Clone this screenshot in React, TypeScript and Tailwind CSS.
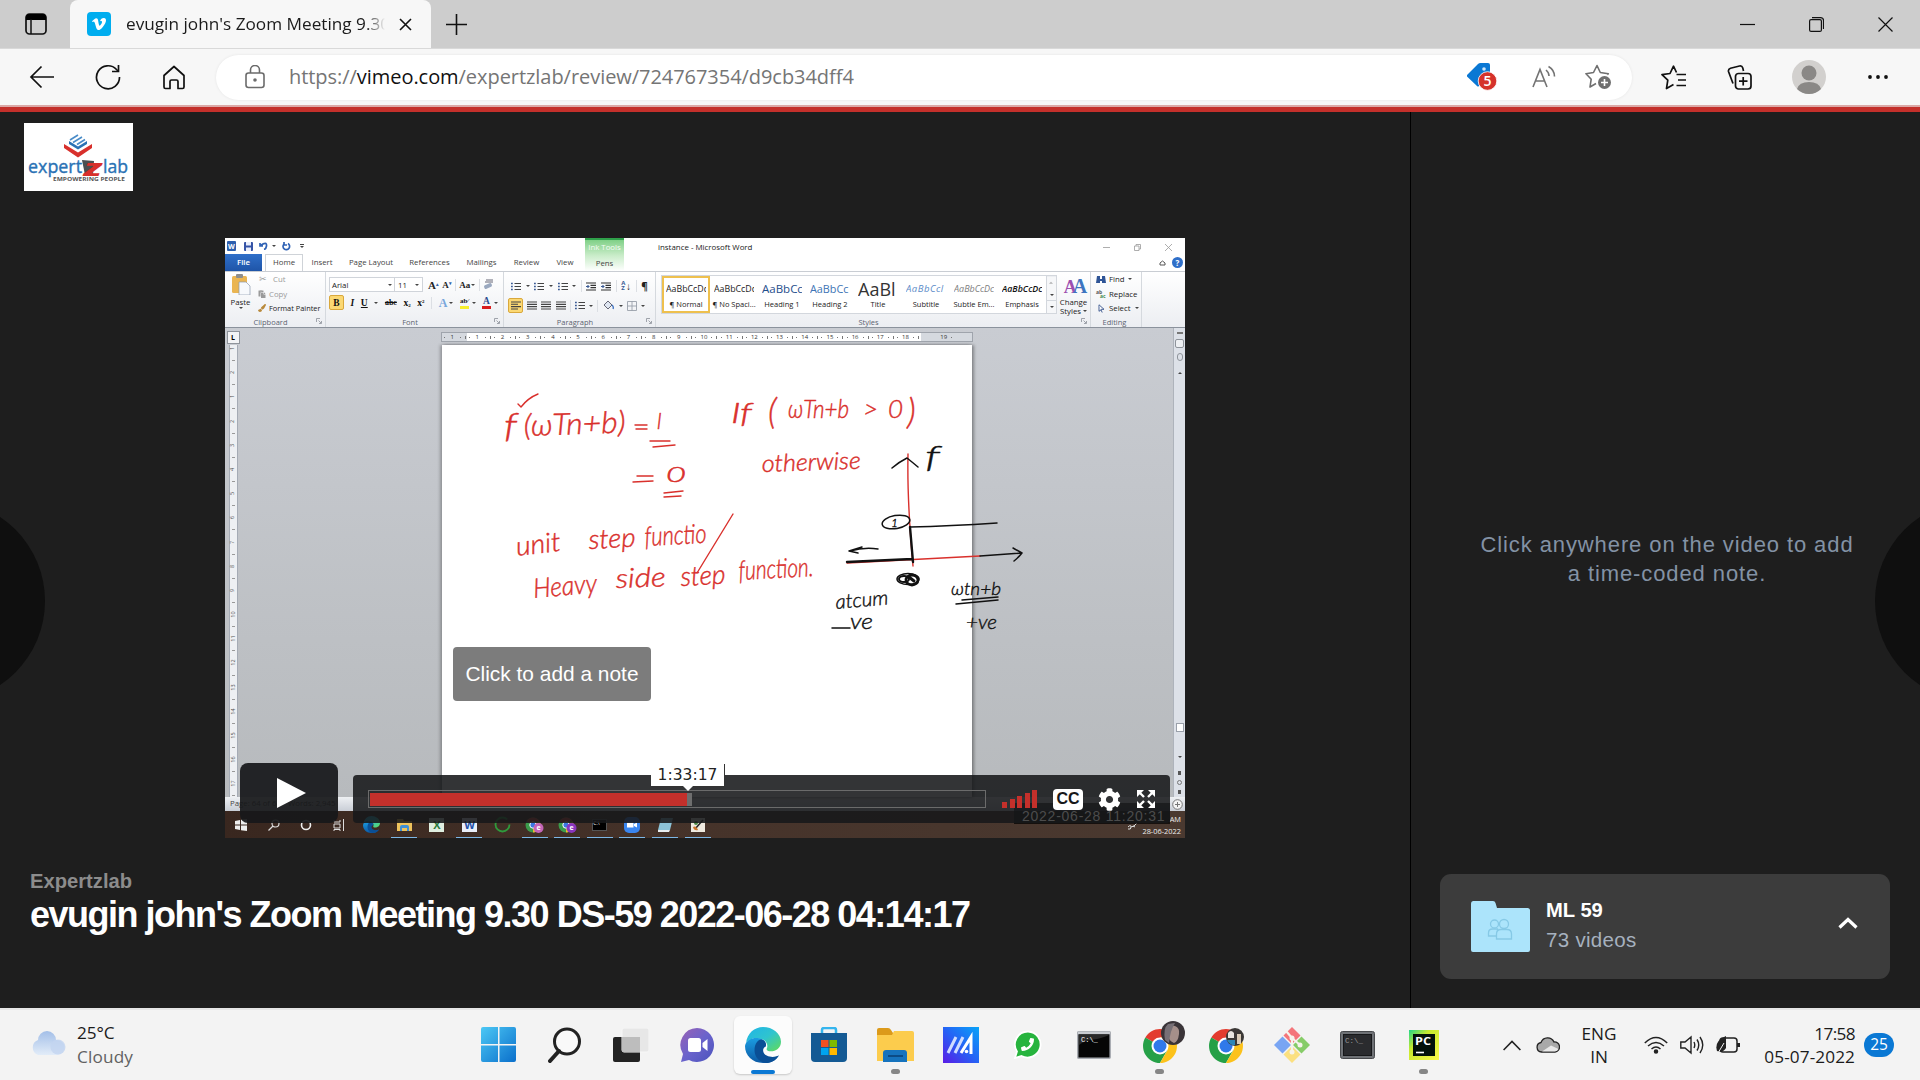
import React from "react";
import { FaVimeoV, FaPaste, FaPaintBrush, FaCog, FaPhoneAlt } from "react-icons/fa";

const UI = "font-['Open_Sans',sans-serif]";

/* ---------- browser chrome ---------- */

function TabStrip() {
  return (
    <div className="flex h-12 items-center bg-[#cdcdcd]">
      <div className="flex h-12 w-[70px] shrink-0 items-center pl-[25px]">
        <svg width="22" height="22" viewBox="0 0 22 22" fill="none">
          <rect x="1" y="1" width="20" height="20" rx="3.500" stroke="#111" strokeWidth="1.700" />
          <path d="M1 7V4.500A3.500 3.500 0 0 1 4.500 1h13A3.500 3.500 0 0 1 21 4.500V7z" fill="#000" />
          <path d="M6 6v15" stroke="#111" strokeWidth="1.500" />
        </svg>
      </div>
      <div className="relative flex h-12 w-[361px] shrink-0 items-center rounded-t-[8px] bg-[#f7f7f7] pl-[17px]">
        <div className="grid h-6 w-6 place-items-center rounded-[4px] bg-[#00adef] text-white">
          <FaVimeoV size={16} />
        </div>
        <div className="ml-[15px] w-[259px] overflow-hidden whitespace-nowrap text-[17.200px] text-[#1b1b1b] [mask-image:linear-gradient(to_right,black_93%,transparent)]">
          evugin john's Zoom Meeting 9.30
        </div>
        <svg className="ml-[14px]" width="13" height="13" viewBox="0 0 13 13" stroke="#111" strokeWidth="1.600">
          <path d="M1 1l11 11M12 1L1 12" />
        </svg>
      </div>
      <svg className="ml-[15px]" width="21" height="21" viewBox="0 0 21 21" stroke="#111" strokeWidth="1.600">
        <path d="M10.500 0v21M0 10.500h21" />
      </svg>
      <div className="ml-auto mr-[27px] flex items-center gap-[54px]">
        <svg width="15" height="15" stroke="#111" strokeWidth="1.200"><path d="M0 7.500h15" /></svg>
        <svg width="15" height="15" viewBox="0 0 15 15" fill="none" stroke="#111" strokeWidth="1.200">
          <rect x=".6" y="2.600" width="11.800" height="11.800" rx="1.500" />
          <path d="M3 .6h8.500a3 3 0 0 1 3 3V12" />
        </svg>
        <svg width="15" height="15" viewBox="0 0 15 15" stroke="#111" strokeWidth="1.200"><path d="M.5.5l14 14M14.500.5l-14 14" /></svg>
      </div>
    </div>
  );
}

function Toolbar() {
  return (
    <div className="flex h-[57px] items-center border-t border-[#d9d9d9] bg-[#f7f7f7]">
      <svg className="ml-[29px]" width="26" height="24" viewBox="0 0 26 24" fill="none" stroke="#111" strokeWidth="1.700">
        <path d="M25 12H2M12.500 1.500L2 12l10.500 10.500" />
      </svg>
      <svg className="ml-[40px]" width="26" height="26" viewBox="0 0 26 26" fill="none" stroke="#111" strokeWidth="1.700">
        <path d="M24.500 13A11.500 11.500 0 1 1 21.500 5.500L23 7" />
        <path d="M23.500 1v6.500H17" />
      </svg>
      <svg className="ml-[41px]" width="24" height="25" viewBox="0 0 24 25" fill="none" stroke="#111" strokeWidth="1.700" strokeLinejoin="round">
        <path d="M2 10.500L12 1.500l10 9v11.500a1.500 1.500 0 0 1-1.500 1.500H16v-7a1.500 1.500 0 0 0-1.500-1.500h-5A1.500 1.500 0 0 0 8 16.500v7H3.500A1.500 1.500 0 0 1 2 22z" />
      </svg>
      <div className="ml-[30px] flex h-[45px] w-[1416px] items-center rounded-full bg-white pl-[29px] shadow-[0_0_3px_rgba(0,0,0,0.08)]">
        <svg width="20" height="24" viewBox="0 0 20 24" fill="none" stroke="#6b6b6b" strokeWidth="1.600">
          <rect x="1" y="8" width="18" height="14.500" rx="2.500" />
          <path d="M5.500 8V5a4.500 4.500 0 0 1 9 0v3" />
          <circle cx="10" cy="15" r="1" fill="#6b6b6b" />
        </svg>
        <div className="-mt-px ml-6 whitespace-nowrap text-[20px] tracking-[-0.05px] text-[#757575]">
          https://<span className="text-[#111]">vimeo.com</span>/expertzlab/review/724767354/d9cb34dff4
        </div>
        <svg className="ml-auto" width="31" height="30" viewBox="0 0 31 30">
          <path d="M1 13L12 2q1-1 2.500-1H22q2 0 2 2v9L13 24q-1 1-2 0L1 14.500z" fill="#0a78d4" />
          <circle cx="18" cy="7" r="1.800" fill="#cfe6f8" />
          <circle cx="21.500" cy="19" r="9.300" fill="#d5322b" stroke="#fff" strokeWidth=".8" />
          <text x="21.500" y="24.200" textAnchor="middle" fontSize="14" fontWeight="600" fill="#fff" fontFamily="Open Sans">5</text>
        </svg>
        <svg className="ml-[35px]" width="24" height="24" viewBox="0 0 24 24" fill="none" stroke="#737373" strokeWidth="1.600">
          <path d="M1 22L8 4.500 15 22M3.500 16h9M14 5q3 2.500 3 6M16.500 1.500q6 3.500 6 10" />
        </svg>
        <svg className="ml-[29px] mr-[20px]" width="27" height="26" viewBox="0 0 27 26" fill="none" stroke="#6f6f6f" strokeWidth="1.600" strokeLinejoin="round">
          <path d="M11 19.500L5 23l1.200-7.800L1 9.700l7.500-1.200L12 1.500l3.300 7 8 1.200-1 1" />
          <circle cx="19.500" cy="18.500" r="6.500" fill="#6f6f6f" stroke="none" />
          <path d="M19.500 15v7M16 18.500h7" stroke="#fff" />
        </svg>
      </div>
      <svg className="ml-[29px]" width="25" height="25" viewBox="0 0 25 25" fill="none" stroke="#111" strokeWidth="1.700" strokeLinejoin="round">
        <path d="M12.500 19.500L5.500 23.500l1.300-8.300L1 9.700l8-1.200 3.500-7.300 3 6.300M15.500 9.500H25M17 15h8M15.500 20.500H25" />
      </svg>
      <svg className="ml-[41px]" width="25" height="25" viewBox="0 0 25 25" fill="none" stroke="#111" strokeWidth="1.700">
        <rect x="8.500" y="8.500" width="15.500" height="15.500" rx="3" />
        <path d="M16.200 12v8.500M12 16.200h8.500M6 18.500L1.500 6.500Q1 4 3.500 3.200L12.500 1Q15 .5 15.800 3L16.500 6" />
      </svg>
      <svg className="ml-[40px]" width="34" height="34" viewBox="0 0 34 34">
        <circle cx="17" cy="17" r="17" fill="#d2d0ce" />
        <circle cx="17" cy="13" r="7.500" fill="#8a8886" />
        <path d="M5 29q2-7 12-7t12 7q-5 5-12 5t-12-5z" fill="#8a8886" />
      </svg>
      <svg className="ml-[42px]" width="20" height="6" fill="#111">
        <circle cx="2" cy="3" r="1.900" /><circle cx="10" cy="3" r="1.900" /><circle cx="18" cy="3" r="1.900" />
      </svg>
    </div>
  );
}

/* ---------- recorded Word window ---------- */

const Caret = () => <span className="inline-block h-0 w-0 border-x-[2px] border-t-[2.500px] border-x-transparent border-t-[#444]" />;
const Sep = () => <span className="h-3 w-px bg-[#dcdfe4]" />;

function Lines({ bullets = false, color = "#444" }: { bullets?: boolean; color?: string }) {
  return (
    <svg width="10" height="9" viewBox="0 0 10 9" stroke={color} strokeWidth="1.100">
      {bullets ? <path d="M3.500 1.500H10M3.500 4.500H10M3.500 7.500H10" /> : <path d="M0 1h10M0 3.300h7M0 5.600h10M0 8h7" />}
      {bullets && <path d="M0 1.500h1.800M0 4.500h1.800M0 7.500h1.800" stroke="#3a5a94" strokeWidth="1.700" />}
    </svg>
  );
}

function FullLines() {
  return (
    <svg width="10" height="9" viewBox="0 0 10 9" stroke="#444" strokeWidth="1.200">
      <path d="M0 1h10M0 3.300h10M0 5.600h10M0 8h10" />
    </svg>
  );
}

function Indent() {
  return (
    <svg width="10" height="9" viewBox="0 0 10 9" stroke="#333" strokeWidth="1.200">
      <path d="M0 1h10M4.500 3.300H10M4.500 5.600H10M0 8h10" />
      <path d="M0 4.500h3.500M2 3v3" stroke="#3a5a94" />
    </svg>
  );
}

function Launcher() {
  return (
    <svg width="6" height="6" viewBox="0 0 6 6" fill="none" stroke="#8a8f98" strokeWidth=".8">
      <path d="M.5 4V.5H4M2.500 2.500L5 5M5.500 3v2.500H3" />
    </svg>
  );
}

function Group({ label, w, launcher = true, children }: { label: string; w: string; launcher?: boolean; children: React.ReactNode }) {
  return (
    <div className={"flex h-full shrink-0 flex-col border-r border-[#d5d9de] " + w}>
      <div className="h-[43px]">{children}</div>
      <div className="flex h-3 items-center pr-[3px] text-[7.500px] text-[#5c6370]">
        <span className="flex-1 pt-px text-center leading-3">{label}</span>
        {launcher && <Launcher />}
      </div>
    </div>
  );
}

const STYLES = [
  { s: "AaBbCcDc", n: "¶ Normal", c: "text-[8.800px] text-[#222]" },
  { s: "AaBbCcDc", n: "¶ No Spaci...", c: "text-[8.800px] text-[#222]" },
  { s: "AaBbCc", n: "Heading 1", c: "text-[11.500px] text-[#1f4e8c]" },
  { s: "AaBbCc", n: "Heading 2", c: "text-[10.800px] text-[#3d74b5]" },
  { s: "AaBl", n: "Title", c: "text-[18px] text-[#333]" },
  { s: "AaBbCcl", n: "Subtitle", c: "text-[9.500px] italic tracking-[0.5px] text-[#5b8cc8]" },
  { s: "AaBbCcDc", n: "Subtle Em...", c: "text-[9px] italic text-[#808080]" },
  { s: "AaBbCcDc", n: "Emphasis", c: "text-[8.800px] italic font-semibold text-[#111]" },
];

function Ribbon() {
  return (
    <div className="flex h-[57px] border-b border-t border-b-[#8b929c] border-t-[#c9cdd3] bg-gradient-to-b from-white to-[#eceef2] text-[7.800px] leading-[10px] text-[#222]">
      <Group label="Clipboard" w="w-[101px]">
        <div className="flex pt-[2px]">
          <div className="flex w-[31px] flex-col items-center">
            <svg width="20" height="21" viewBox="0 0 20 21">
              <rect x="1" y="2" width="15" height="17" rx="1.500" fill="#eab552" />
              <rect x="5" y="0" width="7" height="4" rx="1" fill="#8d8d8d" />
              <path d="M8 8h7l4 4v9H8z" fill="#f7f9fc" stroke="#8b98ad" strokeWidth=".7" />
            </svg>
            <span className="mt-[2px]">Paste</span>
            <Caret />
          </div>
          <div className="flex flex-col gap-[4.500px]">
            <span className="flex items-center gap-[6px] pl-[3px] text-[#9a9a9a]"><span className="text-[9px]">✂</span>Cut</span>
            <span className="flex items-center gap-[3px] pl-[2px] text-[#9a9a9a]"><FaPaste size={8} />Copy</span>
            <span className="flex items-center gap-[3px] whitespace-nowrap pl-[2px] text-[7.400px]"><FaPaintBrush size={8} color="#b98a3c" />Format Painter</span>
          </div>
        </div>
      </Group>
      <Group label="Font" w="w-[178px]">
        <div className="flex items-center pl-[3px] pt-[5px]">
          <span className="flex h-[15px] w-[66px] items-center justify-between border border-[#d0d4da] bg-white px-[2px]">Arial<Caret /></span>
          <span className="flex h-[15px] w-[28px] items-center justify-between border border-l-0 border-[#d0d4da] bg-white px-[3px]">11<Caret /></span>
          <div className="flex flex-1 items-center justify-between pl-[5px] pr-[8px] font-['Liberation_Serif',serif] font-bold text-[#222]">
            <span className="text-[11px]">A<sup className="text-[5px] text-[#3463a8]">▴</sup></span>
            <span className="text-[9px]">A<sup className="text-[5px] text-[#3463a8]">▾</sup></span>
            <Sep />
            <span className="flex items-center gap-px text-[9px]">Aa<Caret /></span>
            <Sep />
            <svg width="12" height="11" viewBox="0 0 12 11"><rect x="1" y="5" width="8" height="4" rx="1.500" transform="rotate(-25 5 7)" fill="#9aa8bf" /><path d="M2 3h8M3 1h7" stroke="#556" strokeWidth=".9" /></svg>
          </div>
        </div>
        <div className="flex items-center justify-between pl-[3px] pr-[5px] pt-[3px] font-['Liberation_Serif',serif] text-[9.500px] font-bold text-[#111]">
          <span className="grid h-[15px] w-[15px] place-items-center rounded-[2px] border border-[#d9a83c] bg-[#fbd873]">B</span>
          <span className="italic">I</span>
          <span className="underline">U</span>
          <Caret />
          <span className="text-[8px] line-through">abc</span>
          <span>x<sub className="text-[5px]">2</sub></span>
          <span>x<sup className="text-[5px]">2</sup></span>
          <Sep />
          <span className="flex items-center gap-[2px] text-[12px] text-[#78a6dc]">A<Caret /></span>
          <span className="flex items-center gap-[3px]"><span className="border-b-[3px] border-[#f6ee2c] text-[7px] leading-[9px]">ab⁄</span><Caret /></span>
          <span className="flex items-center gap-[3px]"><span className="border-b-[3px] border-[#d81e1e] px-px leading-[9px] text-[#2a4b8d]">A</span><Caret /></span>
        </div>
      </Group>
      <Group label="Paragraph" w="w-[152px]">
        <div className="flex items-center justify-between pl-[7px] pr-[7px] pt-[8px]">
          <Lines bullets /><Caret /><Lines bullets /><Caret /><Lines bullets /><Caret /><Sep />
          <Indent /><Indent /><Sep />
          <span className="text-[6px] font-bold leading-[5px] text-[#3a5a94]">A<br />Z</span><span className="-ml-1 text-[10px]">↓</span><Sep />
          <span className="text-[10px] font-bold">¶</span>
        </div>
        <div className="flex items-center justify-between pl-[4px] pr-[10px] pt-[6px]">
          <span className="grid h-[15px] w-[15px] place-items-center rounded-[2px] border border-[#d9a83c] bg-[#fbd873]"><Lines /></span>
          <FullLines /><FullLines /><FullLines /><Sep />
          <Lines bullets /><Caret /><Sep />
          <svg width="12" height="11" viewBox="0 0 12 11"><path d="M2 5l4-4 4 4-4 4z" fill="#dfe6f1" stroke="#445" strokeWidth=".8" /><path d="M10 5q2 2 1 4" stroke="#3a6fc0" strokeWidth="1.300" fill="none" /></svg><Caret />
          <svg width="10" height="10" viewBox="0 0 10 10" fill="none" stroke="#9aa0aa" strokeWidth=".9"><path d="M.5.5h9v9h-9zM5 0v10M0 5h10" /></svg><Caret />
        </div>
      </Group>
      <Group label="Styles" w="w-[435px]">
        <div className="flex pl-[5px] pt-[3px]">
          <div className="flex h-[39px] border border-[#d3d7dd] bg-white">
            {STYLES.map((s, i) => (
              <div key={s.n} className={"flex h-[37px] w-12 flex-col items-center justify-between border-2 pb-[2px] pt-[2px] " + (i === 0 ? "border-[#eec04e]" : "border-transparent")}>
                <div className={"flex h-[18px] w-[40px] items-center overflow-hidden whitespace-nowrap " + s.c}>{s.s}</div>
                <span className="whitespace-nowrap text-[7.500px]">{s.n}</span>
              </div>
            ))}
          </div>
          <div className="flex h-[39px] w-[10px] flex-col divide-y divide-[#d3d7dd] border border-l-0 border-[#d3d7dd] bg-[#f6f7f9]">
            <span className="grid flex-1 rotate-180 place-items-center opacity-40"><Caret /></span>
            <span className="grid flex-1 place-items-center"><Caret /></span>
            <span className="grid flex-1 place-items-center"><Caret /></span>
          </div>
          <div className="flex flex-1 flex-col items-center text-center leading-[8.500px]">
            <span className="font-['Liberation_Serif',serif] text-[18px] font-bold leading-[22px] tracking-[-4px] text-[#9c4fb0]">A<span className="text-[20px] text-[#3d74c0]">A</span></span>
            <span>Change</span>
            <span className="flex items-center gap-[2px]">Styles <Caret /></span>
          </div>
        </div>
      </Group>
      <Group label="Editing" w="w-[51px]" launcher={false}>
        <div className="flex flex-col gap-[4.600px] pl-[5px] pt-[2px]">
          <span className="flex items-center gap-[3px]">
            <svg width="10" height="9" viewBox="0 0 10 9" fill="#2f5597"><path d="M1 1h3v3h2V1h3l1 7H6V6H4v2H0z" /></svg>Find <Caret />
          </span>
          <span className="flex items-center gap-[2px]"><span className="w-[11px] text-[5px] font-bold leading-[4px] text-[#555]">ab<br /><span className="pl-1 text-[#3c8a4e]">ac</span></span>Replace</span>
          <span className="flex items-center gap-[4px] pl-[2px]">
            <svg width="7" height="9" viewBox="0 0 7 9" fill="#fff" stroke="#34518a" strokeWidth=".9"><path d="M1 .8v6.500l2-1.500 1.200 2.700" /><path d="M1 .8l5 4.500H3" /></svg>Select <Caret />
          </span>
        </div>
      </Group>
    </div>
  );
}

const TABS = [
  { t: "Insert", w: "w-[38px]" },
  { t: "Page Layout", w: "w-[60px]" },
  { t: "References", w: "w-[57px]" },
  { t: "Mailings", w: "w-[47px]" },
  { t: "Review", w: "w-[43px]" },
  { t: "View", w: "w-[34px]" },
];

function WordHeader() {
  return (
    <div className="flex h-[33px] bg-white text-[7.800px] text-[#444]">
      <div className="flex w-[360px] flex-col">
        <div className="flex h-4 items-center pl-[2px]">
          <span className="grid h-[10px] w-[9px] place-items-center rounded-[1px] bg-[#2d5fae] text-[7px] font-bold leading-none text-white">W</span>
          <span className="ml-[3px]"><Sep /></span>
          <svg className="ml-[5px]" width="9" height="9" viewBox="0 0 9 9"><rect width="9" height="9" rx="1" fill="#3553a6" /><path d="M2 0h5v3.500H2zM2 5.500h5V9H2z" fill="#e9eefb" /></svg>
          <svg className="ml-[6px]" width="9" height="8" viewBox="0 0 9 8" fill="none" stroke="#2f62b5" strokeWidth="1.700"><path d="M1 1v3h3M1.500 3.500Q8-1 7.500 4q-.5 3-2.500 3.500" /></svg>
          <span className="ml-[4px] flex items-center"><Caret /></span>
          <svg className="ml-[6px]" width="9" height="9" viewBox="0 0 9 9" fill="none" stroke="#2f62b5" strokeWidth="1.700"><path d="M6 1.500A3.300 3.300 0 1 1 2 2M2 0v3h3" /></svg>
          <span className="ml-[8px]"><Sep /></span>
          <span className="ml-[1px] flex flex-col items-center gap-[1px]"><span className="h-px w-1 bg-[#444]" /><Caret /></span>
        </div>
        <div className="flex flex-1 items-center">
          <span className="grid h-full w-[37px] place-items-center bg-gradient-to-b from-[#2f6fc9] to-[#1f55a8] font-semibold text-white">File</span>
          <span className="ml-[3px] grid h-full w-[38px] place-items-center border-x border-t border-[#cfd3d8] bg-white">Home</span>
          {TABS.map((t) => (
            <span key={t.t} className={"whitespace-nowrap pt-px text-center " + t.w}>{t.t}</span>
          ))}
        </div>
      </div>
      <div className="flex w-[39px] flex-col items-center border-t-2 border-[#2fa04a] bg-gradient-to-b from-[#7fd087] via-[#c9ecc9] to-white">
        <span className="h-[15px] whitespace-nowrap leading-[14px] text-[#f4fcf4]">Ink Tools</span>
        <span className="leading-4">Pens</span>
      </div>
      <span className="ml-[34px] whitespace-nowrap pt-[3px] text-[7.900px] leading-3 text-[#222]">instance  -  Microsoft Word</span>
      <div className="ml-auto flex w-[90px] flex-col">
        <div className="flex h-[19px] items-center justify-end gap-[24px] pr-[13px]">
          <svg width="7" height="7" stroke="#999" strokeWidth=".8"><path d="M0 3.500h7" /></svg>
          <svg width="7" height="7" viewBox="0 0 7 7" fill="none" stroke="#999" strokeWidth=".8"><path d="M.5 2h4.500v4.500H.5zM2 1.800V.5h4.500V5H5" /></svg>
          <svg width="7" height="7" stroke="#999" strokeWidth=".8"><path d="M0 0l7 7M7 0L0 7" /></svg>
        </div>
        <div className="flex items-center justify-end gap-[6px] pr-[2px]">
          <svg width="7" height="6" viewBox="0 0 7 6" fill="none" stroke="#555" strokeWidth="1"><path d="M1 3l2.500-2L6 3v2H1z" /></svg>
          <span className="grid h-[11px] w-[11px] place-items-center rounded-full bg-[#2f6fc9] text-[8px] font-bold leading-none text-white">?</span>
        </div>
      </div>
    </div>
  );
}

const hNums = [1, ...Array.from({ length: 18 }, (_, i) => i + 1)];
const vNums = ["1", "2", "1", "2", "3", "4", "5", "6", "7", "8", "9", "10", "11", "12", "13", "14", "15", "16", "17"];

function InkNotes() {
  return (
    <svg
      className="absolute left-0 top-0"
      width="960"
      height="600"
      viewBox="225 238 960 600"
      fill="none"
      strokeLinecap="round"
      strokeLinejoin="round"
      fontFamily="Lato, Open Sans, sans-serif"
      fontWeight="300"
      fontStyle="italic"
    >
      <g stroke="#d9302c" strokeWidth="1.400">
        <path d="M518 404l3 3q7-9 17-13M635 425h12M636 429h11M650 441h20M653 447l22-2M637 476h16M633 482l20-1M664 493l19-2M664 497l17-1M733 514L697 573" />
        <path d="M908 454Q907 500 913 566M847 563L980 556" />
      </g>
      <g fill="#d9302c" stroke="#d9302c" strokeWidth=".45">
        <text x="504" y="437" fontSize="33" textLength="13" lengthAdjust="spacingAndGlyphs">f</text>
        <text x="524" y="436" fontSize="30" textLength="102" lengthAdjust="spacingAndGlyphs" transform="rotate(-2 524 436)">(ωTn+b)</text>
        <text x="657" y="429" fontSize="21">l</text>
        <text x="666" y="482" fontSize="21" textLength="20" lengthAdjust="spacingAndGlyphs">0</text>
        <text x="517" y="556" fontSize="27" textLength="45" lengthAdjust="spacingAndGlyphs" transform="rotate(-7 517 556)">unit</text>
        <text x="589" y="549" fontSize="27" textLength="47" lengthAdjust="spacingAndGlyphs" transform="rotate(-3 589 549)">step</text>
        <text x="645" y="546" fontSize="27" textLength="62" lengthAdjust="spacingAndGlyphs" transform="rotate(-3 645 546)">functio</text>
        <text x="534" y="598" fontSize="27" textLength="64" lengthAdjust="spacingAndGlyphs" transform="rotate(-5 534 598)">Heavy</text>
        <text x="616" y="588" fontSize="27" textLength="50" lengthAdjust="spacingAndGlyphs" transform="rotate(-2 616 588)">side</text>
        <text x="681" y="586" fontSize="27" textLength="45" lengthAdjust="spacingAndGlyphs" transform="rotate(-3 681 586)">step</text>
        <text x="739" y="580" fontSize="27" textLength="75" lengthAdjust="spacingAndGlyphs" transform="rotate(-3 739 580)">function.</text>
        <text x="731" y="423" fontSize="27" textLength="21" lengthAdjust="spacingAndGlyphs">If</text>
        <text x="768" y="424" fontSize="35" textLength="14">(</text>
        <text x="788" y="418" fontSize="25" textLength="61" lengthAdjust="spacingAndGlyphs">ωTn+b</text>
        <text x="863" y="418" fontSize="26" textLength="40" lengthAdjust="spacing">&gt;0</text>
        <text x="907" y="424" fontSize="35" textLength="14">)</text>
        <text x="762" y="472" fontSize="24" textLength="99" lengthAdjust="spacingAndGlyphs" transform="rotate(-2 762 472)">otherwise</text>
      </g>
      <g stroke="#111" strokeWidth="1.500">
        <path d="M892 468q7-6 15-10 5 4 11 9M910 527q40-1 87-4M878 549q-14-2-28 2M862 547l-13 4 9 2M962 600l36-3M956 604l42-4" />
        <path d="M913 562L910 527M847 562l65-3" strokeWidth="2.400" />
        <path d="M980 556l42-3M1013 548l9 5q-3 4-8 8M832 628h18" />
        <ellipse cx="896" cy="522" rx="14" ry="6.500" transform="rotate(-10 896 522)" />
        <ellipse cx="908" cy="579" rx="11" ry="5.500" />
        <ellipse cx="912" cy="580" rx="6" ry="5" strokeWidth="2.800" />
        <ellipse cx="904" cy="579" rx="5" ry="3" strokeWidth="2" />
        <path d="M909 577l5 4" strokeWidth="3" />
      </g>
      <g fill="#111" stroke="#111" strokeWidth=".4">
        <text x="925" y="468" fontSize="32" textLength="15" lengthAdjust="spacingAndGlyphs">f</text>
        <text x="891" y="527" fontSize="12">1</text>
        <text x="836" y="609" fontSize="20" textLength="53" lengthAdjust="spacingAndGlyphs" transform="rotate(-5 836 609)">atcum</text>
        <text x="850" y="629" fontSize="21" textLength="23" lengthAdjust="spacingAndGlyphs">ve</text>
        <text x="951" y="595" fontSize="18" textLength="50" lengthAdjust="spacingAndGlyphs">ωtn+b</text>
        <text x="966" y="629" fontSize="20" textLength="31" lengthAdjust="spacingAndGlyphs">+ve</text>
      </g>
    </svg>
  );
}

function WordDocument() {
  return (
    <div className="flex h-[469px] bg-gradient-to-b from-[#c9ccd2] to-[#b7babd]">
      <div className="flex w-[15px] flex-col items-center pl-px pt-[3px]">
        <span className="grid h-[13px] w-[13px] place-items-center border border-[#8f949b] bg-[#f3f4f6] text-[7px] font-bold leading-none">L</span>
        <div className="mt-px flex w-[9px] flex-1 flex-col items-center justify-between border-x border-[#a5abb5] bg-[#eef0f3] text-[5.500px] text-[#555]">
          {vNums.map((n, i) => (
            <React.Fragment key={i}>
              <span className="-rotate-90 leading-[7px]">{n}</span>
              <span className="h-px w-[3px] bg-[#999]" />
            </React.Fragment>
          ))}
        </div>
      </div>
      <div className="ml-[201px] flex w-[532px] flex-col pt-[4px]">
        <div className="flex h-[10px] items-center border border-[#9fa4ac] bg-white text-[6px] leading-[8px] text-[#333]">
          {hNums.map((n, i) => (
            <span key={i} className={"flex h-full w-[25.200px] shrink-0 items-center justify-center gap-[4px] " + (i === 0 ? "bg-[#d5d9df]" : "")}>
              <i className="h-px w-px bg-[#777]" />
              <span className="w-[7px] text-center">{n}</span>
              <i className="h-px w-px bg-[#777]" />
              <i className="h-[3px] w-px bg-[#777]" />
            </span>
          ))}
          <span className="flex h-full flex-1 items-center justify-center gap-1 bg-[#d5d9df]">19 <i className="h-px w-px bg-[#777]" /></span>
        </div>
        <div className="ml-px mt-[3px] w-[530px] flex-1 bg-white shadow-[2px_0_3px_rgba(0,0,0,0.35),-2px_0_3px_rgba(0,0,0,0.25)]" />
      </div>
      <div className="ml-auto flex w-[12px] flex-col items-center gap-[5px] border-l border-[#aeb3bb] bg-[#dde1e8] pb-[3px] pt-[4px]">
        <span className="h-[2px] w-[6px] bg-[#777]" />
        <span className="h-[9px] w-[9px] rounded-[2px] border border-[#8f949b] bg-[#eef0f3]" />
        <span className="h-[8px] w-[6px] rounded-full border border-[#8f949b]" />
        <span className="rotate-180"><Caret /></span>
        <span className="mt-auto h-[9px] w-[8px] border border-[#9aa0aa] bg-white" />
        <span className="pb-[2px] pt-[3px]"><Caret /></span>
        <span className="h-1 w-[3px] bg-[#555]" />
        <span className="h-[5px] w-[5px] rounded-full border border-[#777]" />
        <span className="h-1 w-[3px] bg-[#555]" />
      </div>
    </div>
  );
}

function MiniChrome({ badge }: { badge: string }) {
  return (
    <svg width="19" height="16" viewBox="0 0 19 16">
      <circle cx="8" cy="8" r="7.500" fill="#3b9b4b" />
      <path d="M8 8L1.500 4.200A7.500 7.500 0 0 1 14.500 4.200L8 5z" fill="#d8453a" />
      <path d="M8 8l6.500-3.800A7.500 7.500 0 0 1 8 15.500z" fill="#ecbb2f" />
      <circle cx="8" cy="8" r="3.200" fill="#3c78e0" stroke="#fff" />
      <circle cx="13.500" cy="11" r="5" fill={badge} />
      <text x="13.500" y="13" fontSize="7" fontWeight="700" fill="#fff" textAnchor="middle" fontFamily="Open Sans">e</text>
    </svg>
  );
}

const INNER: { k: string; run?: boolean; icon: React.ReactNode }[] = [
  { k: "start", icon: <svg width="12" height="12" fill="#eee"><path d="M0 2l5-1v4.500H0zM6 .8L12 0v5.500H6zM0 6.500h5V11l-5-1zM6 6.500h6V12l-6-.8z" /></svg> },
  { k: "search", icon: <svg width="12" height="12" fill="none" stroke="#ddd" strokeWidth="1.200"><circle cx="7.500" cy="4.500" r="3.500" /><path d="M5 7l-4.500 4.500" /></svg> },
  { k: "cortana", icon: <svg width="12" height="12" fill="none" stroke="#eee" strokeWidth="1.600"><circle cx="6" cy="6" r="4.500" /></svg> },
  { k: "tasks", icon: <svg width="12" height="12" fill="none" stroke="#ddd"><path d="M1 1v2h6V1M1 5h6v4H1zM1 12v-1.500h6V12M10.500 0v12" /></svg> },
  { k: "edge", icon: <svg width="17" height="17" viewBox="0 0 34 34"><EdgeArt /></svg> },
  { k: "files", run: true, icon: <svg width="15" height="13"><path d="M0 1h6l1 2h8v10H0z" fill="#eec35c" /><path d="M3 13V9q0-2 2-2h5q2 0 2 2v4h-2v-3H5v3z" fill="#3d8fd6" /></svg> },
  { k: "excel", icon: <span className="grid h-[14px] w-[15px] place-items-center bg-[#dfeee0] text-[11px] font-bold leading-none text-[#2b7a3e]">X</span> },
  { k: "word", run: true, icon: <span className="grid h-[14px] w-[15px] place-items-center bg-[#e9effa] text-[11px] font-bold leading-none text-[#1d4fa8]">W</span> },
  { k: "ring", icon: <svg width="17" height="17" fill="none" stroke="#2f9a3c" strokeWidth="1.800"><circle cx="8.500" cy="8.500" r="7" strokeDasharray="38 6" /></svg> },
  { k: "chrome1", run: true, icon: <MiniChrome badge="#c465b8" /> },
  { k: "chrome2", run: true, icon: <MiniChrome badge="#8a35bd" /> },
  { k: "cmd", run: true, icon: <span className="h-[12px] w-[15px] border border-[#555] bg-black text-[5px] leading-[6px] text-white">C:\</span> },
  { k: "zoom", run: true, icon: <svg width="16" height="16"><rect width="16" height="16" rx="5" fill="#3a86f0" /><path d="M3 5.500h6.500v5H3zM10 7l3-1.500v5L10 9z" fill="#fff" /></svg> },
  { k: "note", run: true, icon: <svg width="15" height="14"><path d="M3 0h12l-3 12H0z" fill="#8cc3d8" /><path d="M0 12h12l-1 2H0z" fill="#e8eef0" /></svg> },
  { k: "paint", run: true, icon: <svg width="14" height="14"><rect width="14" height="14" fill="#efeae0" /><path d="M4 11l8-9" stroke="#222" strokeWidth="1.500" /><circle cx="5" cy="5" r="2" fill="#4c8a45" /><path d="M2 9q3-2 5 3-4 1-5-3z" fill="#c8742c" /></svg> },
];

function WordFooter() {
  return (
    <>
      <div className="flex h-[14px] items-center bg-gradient-to-b from-[#eef0f3] to-[#c9ced6] pl-[5px] text-[7.800px] text-[#444]">
        <span className="w-[58px] whitespace-nowrap">Page: 64 of 64</span>
        <span className="whitespace-nowrap">Words: 2,945</span>
        <span className="ml-[6px]"><Sep /></span>
        <svg className="ml-auto mr-[2px]" width="11" height="11" viewBox="0 0 11 11" fill="#f4f4f4" stroke="#777"><circle cx="5.500" cy="5.500" r="4.800" /><path d="M5.500 3v5M3 5.500h5" /></svg>
      </div>
      <div className="flex h-[27px] bg-gradient-to-r from-[#39271f] via-[#46332a] to-[#4a3930]">
        <div className="flex">
          {INNER.map((a) => (
            <div key={a.k} className="flex w-[32.600px] flex-col items-center justify-between pt-[2px]">
              <div className="grid h-[23px] place-items-center">{a.icon}</div>
              <span className={"h-[1.500px] w-[26px] " + (a.run ? "bg-[#7db7e6]" : "")} />
            </div>
          ))}
        </div>
        <div className="ml-auto flex items-center pr-[4px] text-right text-[7.400px] text-[#eee]">
          <svg className="mr-[2px] mt-1" width="13" height="9" viewBox="0 0 13 9" fill="none" stroke="#ddd"><path d="M1 5q3-3 3 0t-3 2M4 5q3 0 6-4M6 4l2 1" /></svg>
          <div className="flex flex-col leading-[12px]"><span>AM</span><span>28-06-2022</span></div>
        </div>
      </div>
    </>
  );
}

/* ---------- player ---------- */

function Controls() {
  return (
    <>
      <div className="absolute left-[228px] top-[409px] grid h-[54px] w-[198px] place-items-center rounded-[4px] bg-[#7c7c7c] text-[20.900px] text-white">
        <span className="whitespace-nowrap">Click to add a note</span>
      </div>
      <div className="absolute left-[789px] top-[565px] h-[21px] w-[156px] bg-black/70" />
      <div className="absolute left-[15px] top-[525px] grid h-[60px] w-[98px] place-items-center rounded-[8px] bg-[#17181a]/93">
        <svg className="ml-1" width="30" height="30" fill="#fff"><path d="M1 0l29 15L1 30z" /></svg>
      </div>
      <div className="absolute left-[128px] top-[537px] flex h-12 w-[817px] items-center rounded-[4px] bg-[#17181a]/88 pl-[15px]">
        <div className="flex h-[18px] w-[618px] border border-[#6b6b6b] px-px pt-[2px]">
          <span className="h-[13px] w-[317px] bg-[#c4302b]" />
          <span className="h-[13px] w-[5px] bg-[#6e6e6e]" />
        </div>
        <div className="ml-4 flex h-[18px] w-[35px] items-end justify-between">
          <i className="h-[6px] w-[5px] bg-[#c4302b]" />
          <i className="h-[9px] w-[5px] bg-[#c4302b]" />
          <i className="h-[12px] w-[5px] bg-[#c4302b]" />
          <i className="h-[15px] w-[5px] bg-[#c4302b]" />
          <i className="h-[18px] w-[5px] bg-[#c4302b]" />
        </div>
        <span className="ml-4 grid h-[21px] w-[30px] place-items-center rounded-[4px] bg-white text-[16px] font-bold leading-none text-[#17181a]">CC</span>
        <FaCog className="ml-[15px]" size={23} color="#fff" />
        <svg className="ml-[16px]" width="18" height="18" viewBox="0 0 18 18" fill="#fff" stroke="#fff" strokeWidth="2.400">
          <path d="M0 0h7L0 7zM18 0v7l-7-7zM0 18v-7l7 7zM18 18h-7l7-7z" stroke="none" />
          <path d="M2 2l5 5M16 2l-5 5M2 16l5-5M16 16l-5-5" />
        </svg>
      </div>
      <div className="absolute left-[797px] top-[571px] whitespace-nowrap text-[14px] leading-[14px] tracking-[0.75px] text-[#4c4c4c]">2022-06-28 11:20:31</div>
      <div className="absolute left-[426px] top-[525px] grid h-[23px] w-[73px] place-items-center bg-white font-['DejaVu_Sans',sans-serif] text-[15.500px] text-[#222] shadow-[1px_1px_0_#333]">
        <span className="pt-[2px] leading-none">1:33:17</span>
        <span className="absolute left-[32px] top-full h-0 w-0 border-x-[5px] border-t-[5px] border-x-transparent border-t-white" />
      </div>
    </>
  );
}

function Player() {
  return (
    <div className="relative ml-[225px] mt-[47px] h-[600px] w-[960px] overflow-hidden">
      <div className="font-['Open_Sans',sans-serif]">
        <WordHeader />
        <Ribbon />
        <WordDocument />
        <WordFooter />
      </div>
      <InkNotes />
      <Controls />
    </div>
  );
}

function Logo() {
  return (
    <div className="ml-6 mt-[11px] h-[68px] w-[109px] bg-white">
      <svg width="109" height="68" viewBox="0 0 109 68">
        <path d="M40 21l14 8.500L68 21v4L54 34.500 40 25z" fill="#d8302c" />
        <path d="M45 18l9 5.500 9-5.500v3l-9 5.500-9-5.500z" fill="#2a72b5" />
        <path d="M46 17l8-5M49 19.500l9-5.500M53 21.500l8-5" stroke="#4a8cc8" strokeWidth="1.600" />
        <path d="M58 37l12 1-1 14H61z" fill="#4a4f52" />
        <g fontFamily="Open Sans, sans-serif">
          <text x="4" y="50" fontSize="19" fill="#2a72b5" stroke="#2a72b5" strokeWidth=".4" textLength="54" lengthAdjust="spacingAndGlyphs">expert</text>
          <text x="60" y="53" fontSize="17" fontWeight="800" fontStyle="italic" fill="#d8302c" textLength="17" lengthAdjust="spacingAndGlyphs">Z</text>
          <text x="79" y="50" fontSize="19" fill="#2a72b5" stroke="#2a72b5" strokeWidth=".4" textLength="25" lengthAdjust="spacingAndGlyphs">lab</text>
          <text x="29" y="58" fontSize="4.500" fontWeight="700" fill="#555" textLength="72" lengthAdjust="spacingAndGlyphs">EMPOWERING PEOPLE</text>
        </g>
      </svg>
    </div>
  );
}

function FolderCard() {
  return (
    <div className="mb-[29px] ml-[29px] flex h-[105px] w-[450px] items-center rounded-[11px] bg-[#3c3c3c] pl-[31px] pr-[32px]">
      <svg className="mt-px" width="59" height="52" viewBox="0 0 59 52">
        <path d="M0 3Q0 0 2.500 0H22q2 0 2.500 2l1.500 5h30.500Q59 7 59 9.500V49q0 2-2 2H2q-2 0-2-2z" fill="#ace4fb" />
        <g fill="#ace4fb" stroke="#86c9e6" strokeWidth="1.300">
          <circle cx="23.500" cy="23" r="4" /><path d="M17.500 35v-3q0-4 4-4h5v7z" />
          <circle cx="33" cy="23" r="4.500" /><path d="M25.500 38v-5q0-4.500 4.500-4.500h6q4.500 0 4.500 4.500v5z" />
        </g>
      </svg>
      <div className="-mt-[4px] ml-[16px] flex flex-col">
        <span className="text-[20.200px] font-bold leading-[29px] text-white">ML 59</span>
        <span className="text-[20.500px] leading-[29px] tracking-[0.3px] text-[#a6b1bf]">73 videos</span>
      </div>
      <svg className="-mt-[7px] ml-auto" width="20" height="12" viewBox="0 0 20 12" fill="none" stroke="#fff" strokeWidth="3.200">
        <path d="M1.500 10.500L10 2.500l8.500 8" />
      </svg>
    </div>
  );
}

/* ---------- Windows taskbar ---------- */

function EdgeArt() {
  return (
    <>
      <defs>
        <linearGradient id="edgeTop" x1="0" y1="0" x2="1" y2="1">
          <stop offset="0" stopColor="#1fb4e8" /><stop offset=".5" stopColor="#2fc4cf" /><stop offset="1" stopColor="#62dc55" />
        </linearGradient>
        <linearGradient id="edgeLow" x1="0" y1="0" x2="0" y2="1">
          <stop offset="0" stopColor="#1b9de2" /><stop offset="1" stopColor="#0c59a4" />
        </linearGradient>
      </defs>
      <path d="M1 15C2 6 9 0 17 0c9 0 17 6 17 14 0 6-5 9-9.500 9-3 0-4.500-1-4-2.500C22 18 21 12 14 11 8 10 3 12 1 15z" fill="url(#edgeTop)" />
      <path d="M0 18C1 12 7 10 12 10.500c5 .5 8 3.500 7.500 8C16 16 13 21 16 25c4 5 11 5 16 2-3 5-9 8-15 7C7 34 0 27 0 18z" fill="url(#edgeLow)" />
      <path d="M9 22c0-7 4-11 7.500-10 3 1 4 4 3 6.500-4 2-2.500 7 1 8.500 4 2 8 1.500 11.500 0-3 5-8 7-12 7C13 33 9 28 9 22z" fill="#0a4f96" />
    </>
  );
}

function ChromeArt({ children }: { children?: React.ReactNode }) {
  return (
    <svg className="-mt-[5px]" width="52" height="46" viewBox="-3 0 52 46">
      <path d="M23 27L8.300 18.500A17 17 0 0 1 37.700 18.500H23z" fill="#e33b2e" />
      <path d="M23 27L8.300 18.500A17 17 0 0 0 23 44l7.400-13z" fill="#25a047" />
      <path d="M30.400 31.200L23 44A17 17 0 0 0 37.700 18.500H23z" fill="#fcc21b" />
      <circle cx="23" cy="27" r="8.500" fill="#fff" />
      <circle cx="23" cy="27" r="6.500" fill="#3079ea" />
      {children}
    </svg>
  );
}

const APPS: { k: string; dot?: boolean; active?: boolean; icon: React.ReactNode }[] = [
  {
    k: "start",
    icon: (
      <svg width="36" height="36">
        <defs><linearGradient id="win" x1="0" y1="0" x2="1" y2="1"><stop offset="0" stopColor="#4cc8f5" /><stop offset="1" stopColor="#0a6fcb" /></linearGradient></defs>
        <path d="M2 0h15v17H0V2q0-2 2-2zM18.500 0H33q2 0 2 2v15H18.500zM0 18.500h17V35H2q-2 0-2-2zM18.500 18.500H35V33q0 2-2 2H18.500z" fill="url(#win)" />
      </svg>
    ),
  },
  { k: "search", icon: <svg width="34" height="36" fill="none" stroke="#222" strokeWidth="3"><circle cx="19" cy="14.500" r="12.500" fill="#f9f9f9" /><path d="M11 24L2 34" strokeWidth="4" strokeLinecap="round" /></svg> },
  { k: "views", icon: <svg width="36" height="34"><rect x="0" y="9" width="27" height="25" rx="2" fill="#222" /><rect x="9" y="0" width="27" height="24" rx="2" fill="#e4e4e4" fillOpacity=".85" stroke="#f7f7f7" /><path d="M9 9h18v15H9z" fill="#bdbdbd" /></svg> },
  {
    k: "chat",
    icon: (
      <svg width="36" height="36">
        <defs><linearGradient id="chat" x1="0" y1="0" x2="1" y2="1"><stop offset="0" stopColor="#9a62b5" /><stop offset=".5" stopColor="#6a63cc" /><stop offset="1" stopColor="#4b53bc" /></linearGradient></defs>
        <path d="M18 1a17 17 0 1 1-8 32L2 35l2-8A17 17 0 0 1 18 1z" fill="url(#chat)" />
        <rect x="9" y="11" width="13" height="14" rx="2.500" fill="#fff" /><path d="M23.500 16l5-4v12l-5-4z" fill="#fff" />
      </svg>
    ),
  },
  { k: "edge", active: true, icon: <svg width="36" height="36" viewBox="0 0 34 34"><EdgeArt /></svg> },
  {
    k: "store",
    icon: (
      <svg width="36" height="36">
        <path d="M11 8V3q0-2 2-2h10q2 0 2 2v5" fill="none" stroke="#35b5ee" strokeWidth="2.500" />
        <path d="M0 6h36v25q0 4-4 4H4q-4 0-4-4z" fill="#145a94" />
        <path d="M10 13h7.500v7H10z" fill="#f25022" /><path d="M18.500 13H26v7h-7.500z" fill="#7fba00" /><path d="M10 21h7.500v7H10z" fill="#00a4ef" /><path d="M18.500 21H26v7h-7.500z" fill="#ffb900" />
      </svg>
    ),
  },
  {
    k: "files",
    dot: true,
    icon: (
      <svg width="37" height="34">
        <path d="M0 2q0-2 2-2h9q2 0 3 2l2 3v4H0z" fill="#dc9a1a" />
        <path d="M0 7h15l2-4h18q2 0 2 2v28H0z" fill="#fccc4d" />
        <path d="M6 34V25q0-3 3-3h18q3 0 3 3v9z" fill="#1673bd" /><path d="M11 28h15" stroke="#0c4b85" strokeWidth="2" />
      </svg>
    ),
  },
  {
    k: "asus",
    icon: (
      <svg width="36" height="36">
        <defs><linearGradient id="asus" x1="0" y1="1" x2="1" y2="0"><stop offset="0" stopColor="#5a1be6" /><stop offset=".5" stopColor="#2563f5" /><stop offset="1" stopColor="#08a4f8" /></linearGradient></defs>
        <path d="M0 0h36v36H0z" fill="url(#asus)" />
        <path d="M5 26L13 10M12 26l8-16" stroke="#cfdcff" strokeWidth="3" /><path d="M18 26l10-16v17" stroke="#fff" strokeWidth="3" fill="none" /><circle cx="23.500" cy="24.500" r="1.800" fill="#fff" />
      </svg>
    ),
  },
  {
    k: "whatsapp",
    icon: (
      <span className="relative grid h-[30px] w-[30px] place-items-center">
        <svg width="30" height="30" viewBox="0 0 30 30"><path d="M15 1.500a13 13 0 1 1-6.500 24.500L2 28l2-6.500A13 13 0 0 1 15 1.500z" fill="#27b43e" stroke="#fff" strokeWidth="1.800" /></svg>
        <FaPhoneAlt className="absolute -scale-x-100" size={13} color="#fff" />
      </span>
    ),
  },
  {
    k: "cmd",
    icon: (
      <svg width="34" height="28"><rect x=".7" y=".7" width="32.500" height="26.500" rx="1" fill="#060606" stroke="#a9adb3" strokeWidth="1.500" /><path d="M1 2h32" stroke="#c9ccd1" strokeWidth="2.500" /><path d="M2 14Q8 9 20 8 28 6 32 4H2z" fill="#2a2a2a" /><text x="4" y="11" fontSize="7" fill="#fff" fontFamily="Liberation Mono">C:\_</text></svg>
    ),
  },
  {
    k: "chrome1",
    dot: true,
    icon: (
      <ChromeArt>
        <circle cx="36" cy="14" r="12" fill="#3a3438" />
        <path d="M31 11q2-6 7-4t4 8q-1 8-5 9-5-2-6-7z" fill="#a58f8a" /><path d="M38 4q-5 8-6 20l-4-3q-2-12 3-16z" fill="#777076" />
      </ChromeArt>
    ),
  },
  {
    k: "chrome2",
    icon: (
      <ChromeArt>
        <circle cx="32" cy="18" r="9" fill="#3b3836" />
        <path d="M25 14q3-4 6 0v5h-6z" fill="#e8e4e0" /><path d="M24 21h8v5q-5 1-8-5z" fill="#2d86b8" /><path d="M34 15h4v10h-4z" fill="#d9cbb8" />
      </ChromeArt>
    ),
  },
  {
    k: "git",
    icon: (
      <svg width="36" height="36" viewBox="0 0 36 36">
        <path d="M18 0l8.500 8.500L18 17 9.500 8.500z" fill="#f4757a" /><path d="M8.500 9.500L17 18l-8.500 8.500L0 18z" fill="#79a5f3" /><path d="M27.500 9.500L36 18l-8.500 8.500L19 18z" fill="#86cc68" /><path d="M18 19l8.500 8.500L18 36l-8.500-8.500z" fill="#fbe080" />
        <path d="M12 4l6 7v14M18 11l8 7" stroke="#f6f3ec" strokeWidth="2.200" fill="none" /><circle cx="18" cy="11" r="2.500" fill="#f6f3ec" /><circle cx="18" cy="25" r="2.500" fill="#f6f3ec" /><circle cx="26" cy="18" r="2.500" fill="#f6f3ec" />
      </svg>
    ),
  },
  {
    k: "term",
    icon: (
      <svg width="35" height="28"><rect x=".5" y=".5" width="34" height="27" rx="2" fill="#6f7276" stroke="#47494c" /><rect x="3.500" y="3.500" width="28" height="21" fill="#2a2b2e" stroke="#17181a" /><text x="5" y="12" fontSize="7.500" fill="#9a9a9a" fontFamily="Liberation Mono">C:\_</text></svg>
    ),
  },
  {
    k: "pycharm",
    dot: true,
    icon: (
      <svg width="30" height="30">
        <defs><linearGradient id="pc" x1="0" y1="0" x2="1" y2="1"><stop offset="0" stopColor="#21d789" /><stop offset=".35" stopColor="#c8ea2e" /><stop offset="1" stopColor="#fcf84a" /></linearGradient></defs>
        <path d="M0 0h30v30H0z" fill="url(#pc)" /><path d="M4 4h22v22H4z" fill="#04120a" /><path d="M7 22.500h8" stroke="#fff" strokeWidth="1.600" />
        <text x="6" y="15" fontSize="11" fontWeight="700" fill="#fff" fontFamily="Open Sans" textLength="16" lengthAdjust="spacingAndGlyphs">PC</text>
      </svg>
    ),
  },
];

function Taskbar() {
  return (
    <div className={"flex h-[72px] items-center border-t-2 border-[#e6e6e6] bg-[#f3f3f3] text-[17.200px] text-[#1b1b1b] " + UI}>
      <svg className="-mt-1 ml-[30px]" width="36" height="24" viewBox="0 0 36 24">
        <defs><linearGradient id="cl" x1="0" y1="0" x2="0" y2="1"><stop offset="0" stopColor="#a3bfe8" /><stop offset="1" stopColor="#e2ecf8" /></linearGradient></defs>
        <path d="M8 24a8 8 0 0 1 0-15A9 9 0 0 1 26 9a7.500 7.500 0 0 1 2 15z" fill="url(#cl)" />
        <circle cx="28" cy="16" r="7.500" fill="#c3d5f0" fillOpacity=".8" />
      </svg>
      <div className="ml-[11px] flex w-[389px] flex-col leading-6">
        <span className="tracking-[-0.1px]">25°C</span>
        <span className="tracking-[0.15px] text-[#616161]">Cloudy</span>
      </div>
      <div className="flex h-[58px] w-[991px] shrink-0">
        {APPS.map((a) => (
          <div key={a.k} className="flex flex-1 justify-center">
            <div className={"relative grid h-[58px] w-[58px] place-items-center rounded-[6px] pb-px " + (a.active ? "bg-[#fcfcfc] shadow-[0_1px_2px_rgba(0,0,0,0.18)]" : "")}>
              {a.icon}
              {a.active && <span className="absolute bottom-0 h-[4px] w-6 rounded-full bg-[#0a78d4]" />}
              {a.dot && <span className="absolute bottom-0 h-[5px] w-[9px] rounded-full bg-[#868686]" />}
            </div>
          </div>
        ))}
      </div>
      <svg className="ml-[46px]" width="18" height="11" fill="none" stroke="#222" strokeWidth="1.600"><path d="M.6 10L9 1.500 17.400 10" /></svg>
      <svg className="ml-[15px]" width="24" height="16" viewBox="0 0 24 16" stroke="#222" strokeWidth="1.300">
        <path d="M5.500 15a4.800 4.800 0 0 1-.5-9.500A7 7 0 0 1 18 5a5 5 0 0 1 1 10z" fill="#a9a9a9" /><path d="M6 14.400l9-6 7.500 3.600q-1 2.400-3.500 2.400z" fill="#e8e8e8" stroke="none" />
      </svg>
      <div className="ml-[17px] flex w-[44px] flex-col items-center leading-[23px]"><span>ENG</span><span>IN</span></div>
      <div className="ml-[23px] flex items-center gap-[12px]">
        <svg width="24" height="18" viewBox="0 0 24 18" fill="none" stroke="#222" strokeWidth="1.500"><path d="M.8 7Q12-4 23.200 7M4 10q8-7 16 0M7.500 13q4.500-4 9 0" /><circle cx="12" cy="15.500" r="1.500" fill="#222" /></svg>
        <svg width="24" height="20" viewBox="0 0 24 20" fill="none" stroke="#222" strokeWidth="1.400"><path d="M.8 7H5l6-5v16l-6-5H.8zM14 7q1.500 3 0 6M17 4.500q3.500 5.500 0 11M20 2q5.500 8 0 16" /></svg>
        <svg width="24" height="18" viewBox="0 0 24 18"><rect x="4" y="2" width="17" height="14" rx="3" fill="none" stroke="#222" strokeWidth="1.500" /><path d="M21 7h3v4h-3z" fill="#222" /><path d="M10 0v12q-3 5-9 3Q-2 5 10 0z" fill="#222" /><path d="M2 17L8 7" stroke="#f3f3f3" /></svg>
      </div>
      <div className="ml-[15px] flex w-[100px] flex-col items-end leading-[23px]">
        <span className="tracking-[-0.6px]">17:58</span>
        <span className="tracking-[0.1px]">05-07-2022</span>
      </div>
      <span className="ml-[9px] grid h-6 w-[30px] place-items-center rounded-full bg-[#0a78d4] text-[15.500px] leading-none text-white">25</span>
    </div>
  );
}

export default function App() {
  return (
    <div className={"flex h-[1080px] w-[1920px] flex-col overflow-hidden bg-[#1e1e1e] " + UI}>
      <TabStrip />
      <Toolbar />
      <div className="h-[7px] shrink-0 border-t-2 border-[#dba9a7] bg-[#c4302b]" />
      <div className="relative flex h-[896px] overflow-hidden font-['Liberation_Sans',sans-serif]">
        <main className="w-[1410px]">
          <Logo />
          <Player />
          <div className="ml-[30px] mt-[32px] flex flex-col">
            <span className="text-[20.200px] font-bold leading-[22px] text-[#8c8c8c]">Expertzlab</span>
            <h1 className="mt-px whitespace-nowrap text-[36px] font-bold leading-[44px] tracking-[-1.500px] text-white">evugin john's Zoom Meeting 9.30 DS-59 2022-06-28 04:14:17</h1>
          </div>
        </main>
        <aside className="flex flex-1 flex-col justify-between border-l border-black">
          <p className="ml-[69px] mt-[418px] w-[374px] whitespace-nowrap text-center text-[22px] leading-[29px] tracking-[0.9px] text-[#8392a5]">Click anywhere on the video to add<br />a time-coded note.</p>
          <FolderCard />
        </aside>
        <div className="absolute -left-[157px] top-[388px] h-[202px] w-[202px] rounded-full bg-[#0f0f0f]" />
        <div className="absolute -right-[157px] top-[388px] h-[202px] w-[202px] rounded-full bg-[#0f0f0f]" />
      </div>
      <Taskbar />
    </div>
  );
}
